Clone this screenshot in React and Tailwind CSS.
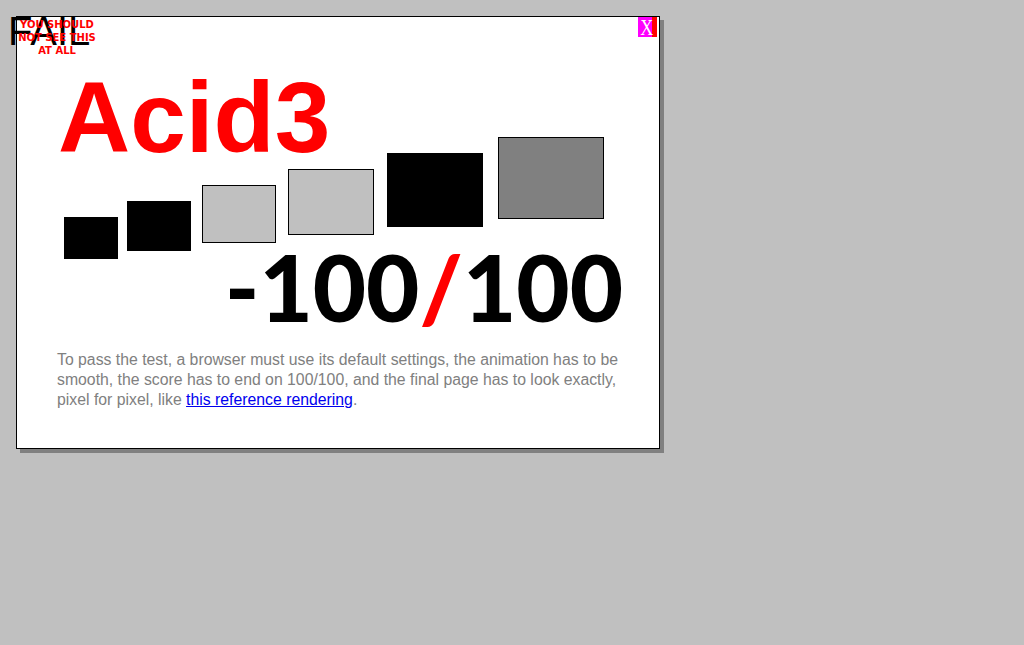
export default function App() {
  return (
    <div className="relative w-full h-[645px] bg-[#c0c0c0] pt-[16px] pl-[16px] overflow-hidden">
      {/* Panel */}
      <div className="relative w-[644px] h-[433px] bg-white border border-black shadow-[4px_4px_0_#808080] flex flex-col">
        <div className="ml-[41px] mt-[50px] h-[100px] text-[100px] leading-none font-bold text-[#ff0000] font-['Liberation_Sans',Arial,sans-serif]">
          Acid3
        </div>

        {/* Buckets */}
        <div className="ml-[47px] mt-[-30px] flex items-start h-[122px]">
          <Bucket className="mt-[80px] w-[54px] h-[42px] bg-black" />
          <Bucket className="ml-[9px] mt-[64px] w-[64px] h-[50px] bg-black" />
          <Bucket className="ml-[11px] mt-[48px] w-[74px] h-[58px] bg-[#c0c0c0] border border-black" />
          <Bucket className="ml-[12px] mt-[32px] w-[86px] h-[66px] bg-[#c0c0c0] border border-black" />
          <Bucket className="ml-[13px] mt-[16px] w-[96px] h-[74px] bg-black" />
          <Bucket className="ml-[15px] mt-0 w-[106px] h-[82px] bg-[#808080] border border-black" />
        </div>

        {/* Score */}
        <div className="mt-[-18px] pr-[36px] text-right text-[92px] leading-none font-black tracking-[0px] text-black font-['Lato',sans-serif] whitespace-nowrap">
          -100<span className="text-[#ff0000]">/</span>100
        </div>

        {/* Instructions */}
        <p className="ml-[40px] mt-[17px] w-[570px] text-[15.8px] leading-[20px] text-[#808080] font-['Liberation_Sans',Arial,sans-serif]">
          To pass the test, a browser must use its default settings, the animation has to be
          smooth, the score has to end on 100/100, and the final page has to look exactly,
          pixel for pixel, like{" "}
          <a href="#" className="text-[#0000ee] underline">
            this reference rendering
          </a>
          .
        </p>

        {/* Close button */}
        <div className="absolute top-0 left-[621px] flex h-[20px]">
          <div className="w-[14px] h-[20px] bg-[#ff00ff] text-white text-[24px] leading-[21px] text-center font-['Liberation_Serif','Times_New_Roman',serif]">
            <span className="inline-block scale-x-75">X</span>
          </div>
          <div className="w-[5px] h-[20px] bg-[#ff0000]" />
        </div>
      </div>

      {/* FAIL overlay */}
      <div className="absolute left-[8px] top-[11px] text-[40px] leading-none text-black font-['Liberation_Sans',Arial,sans-serif]">
        FAIL
      </div>
      <div className="absolute left-[16px] top-[18px] w-[82px] text-center text-[10px] leading-[13px] font-bold text-[#ff0000] font-['DejaVu_Sans',sans-serif]">
        YOU SHOULD NOT SEE THIS AT ALL
      </div>
    </div>
  );
}

function Bucket({ className }) {
  return <div className={`shrink-0 box-border ${className}`} />;
}
